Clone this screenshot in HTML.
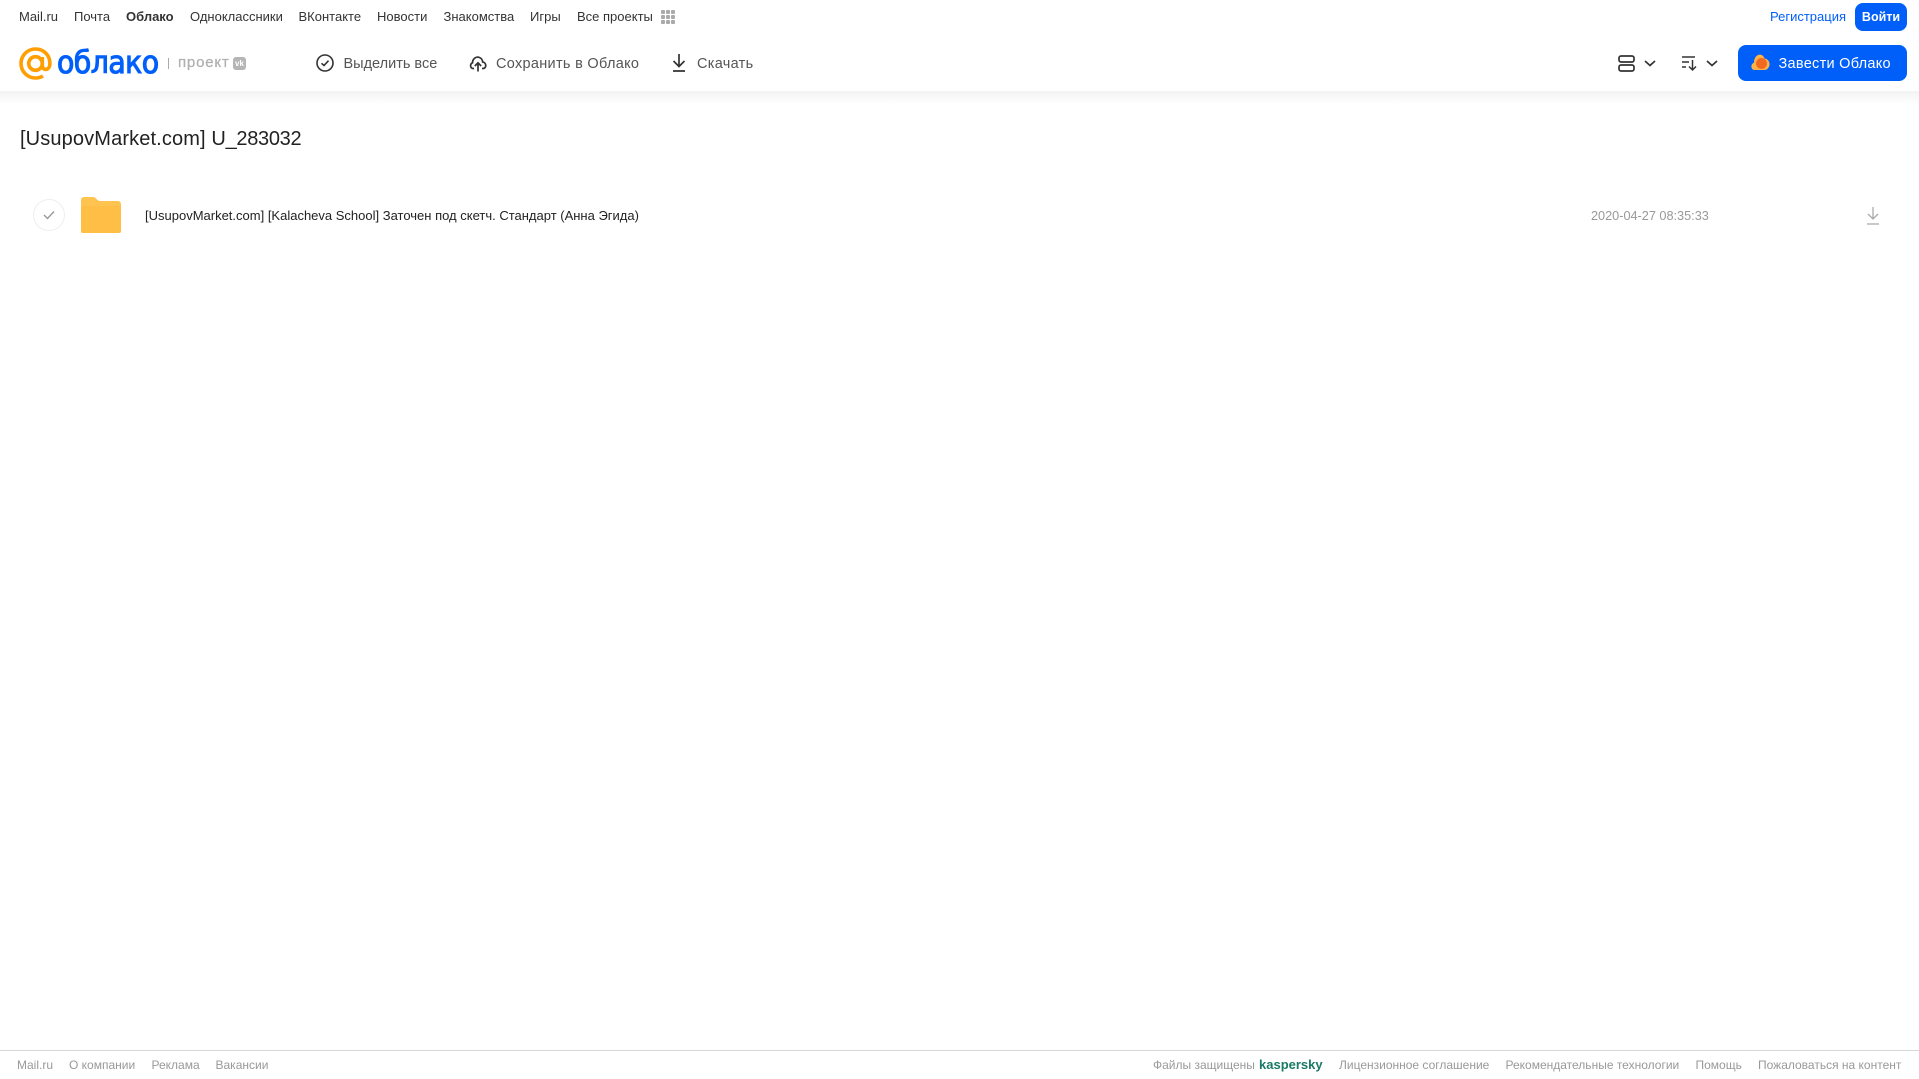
<!DOCTYPE html>
<html lang="ru"><head><meta charset="utf-8"><title>Облако</title>
<style>
html,body{margin:0;padding:0;background:#fff;width:1919px;height:1079px;overflow:hidden;font-family:"Liberation Sans",Arial,sans-serif}
.t{position:absolute;white-space:nowrap;line-height:20px}
.n{top:7px;font-size:13px;color:#333}
.a{top:54px;font-size:14.5px;color:#555;letter-spacing:.3px}
.f{top:1055px;font-size:12px;color:#999}
svg{position:absolute;overflow:visible}
</style></head><body>
<div style="position:absolute;left:0;top:91px;width:1919px;height:14px;background:linear-gradient(#f3f3f3,#fff)"></div>
<span class="t n" style="left:19px">Mail.ru</span>
<span class="t n" style="left:74px">Почта</span>
<span class="t n" style="left:126px;font-weight:bold">Облако</span>
<span class="t n" style="left:190px">Одноклассники</span>
<span class="t n" style="left:298.5px">ВКонтакте</span>
<span class="t n" style="left:377px">Новости</span>
<span class="t n" style="left:443.5px">Знакомства</span>
<span class="t n" style="left:530px">Игры</span>
<span class="t n" style="left:577px">Все проекты</span>
<svg style="left:661px;top:10px" width="14" height="14" fill="#aaa"><rect width="4" height="4" rx="1"/><rect x="5" width="4" height="4" rx="1"/><rect x="10" width="4" height="4" rx="1"/><rect y="5" width="4" height="4" rx="1"/><rect x="5" y="5" width="4" height="4" rx="1"/><rect x="10" y="5" width="4" height="4" rx="1"/><rect y="10" width="4" height="4" rx="1"/><rect x="5" y="10" width="4" height="4" rx="1"/><rect x="10" y="10" width="4" height="4" rx="1"/></svg>
<span class="t n" style="left:1770px;color:#005ff9">Регистрация</span>
<div class="t" style="left:1855px;top:3px;width:52px;height:28px;line-height:28px;background:#005ff9;border-radius:8px;color:#fff;font-size:12.5px;font-weight:bold;text-align:center">Войти</div>
<svg style="left:19px;top:47px" width="33" height="33" viewBox="0 0 33 33" fill="none" stroke="#ff9e00" stroke-width="3.6"><circle cx="16.5" cy="16.5" r="6.8"/><path d="M23.3 10v8.5c0 5.5 7.5 5.5 7.6-2C31 8 24.500 2 16.500 2 8.500 2 2 8.500 2 16.500S8.500 31 16.500 31c3 0 5.500-.8 7.500-2"/></svg>
<span class="t" style="left:57px;top:46px;font:normal 31px/34px 'DejaVu Sans',sans-serif;color:#005ff9;-webkit-text-stroke:1.1px #005ff9;letter-spacing:-.6px;transform-origin:0 0;transform:scaleX(.915)">облако</span>
<div style="position:absolute;left:168px;top:58px;width:1px;height:11px;background:#aaa"></div>
<span class="t" style="left:178px;top:53px;font-size:15px;color:#b0b0b0;letter-spacing:.8px;-webkit-text-stroke:.25px #b0b0b0">проект</span>
<div style="position:absolute;left:233px;top:57px;width:13px;height:13px;background:#b5b5b5;border-radius:3px;color:#fff;font:bold 8px/13px 'Liberation Sans',sans-serif;text-align:center">vk</div>
<svg style="left:316px;top:54px" width="18" height="18" fill="none" stroke="#333" stroke-width="1.6"><circle cx="9" cy="9" r="8"/><path d="M5.500 9.300 8 11.500l4.500-4.800"/></svg>
<span class="t a" style="left:343.5px;letter-spacing:0">Выделить все</span>
<svg style="left:469px;top:54px" width="18" height="18" fill="none" stroke="#333" stroke-width="1.7"><path d="M5 14.500H4C1 14.500.8 9.700 3.500 8.800 3.500 5 7 2 10.500 3.500c2 .8 3 2.500 3.200 4.500 4 .5 4 6.500.3 6.500h-1"/><path d="M9 17.500V9M5.800 12 9 8.800l3.200 3.200"/></svg>
<span class="t a" style="left:496px">Сохранить в Облако</span>
<svg style="left:672px;top:54px" width="14" height="18" fill="none" stroke="#333" stroke-width="1.700"><path d="M7 0v12M1.500 7 7 12.500 12.500 7M1 17h12"/></svg>
<span class="t a" style="left:697px">Скачать</span>
<svg style="left:1618px;top:55px" width="17" height="17" fill="none" stroke="#333" stroke-width="1.700"><rect x="1" y="1" width="15" height="6" rx="2"/><rect x="1" y="10" width="15" height="6" rx="2"/></svg>
<svg style="left:1644px;top:60px" width="12" height="7" fill="none" stroke="#333" stroke-width="1.700"><path d="M1 1l5 4.500L11 1"/></svg>
<svg style="left:1681px;top:55px" width="17" height="16" fill="none" stroke="#333" stroke-width="1.500"><path d="M1 2h13M1 7h7M1 12h4M11.500 5v10M8 11.500l3.500 3.500 3.500-3.500"/></svg>
<svg style="left:1706px;top:60px" width="12" height="7" fill="none" stroke="#333" stroke-width="1.700"><path d="M1 1l5 4.500L11 1"/></svg>
<div style="position:absolute;left:1738px;top:45px;width:169px;height:36px;background:#005ff9;border-radius:8px"></div>
<svg style="left:1751px;top:54px" width="19" height="17"><path d="M4 16C1 16 0 13.500.5 11.500 1 9.500 2.500 9 3 8.500 3 3 7-.5 10.500 1c1.500.5 2.500 2 3 3.500C17 5 19 8 18.500 11c-.5 3-2.500 5-5.500 5z" fill="#ffb347"/><circle cx="10.500" cy="9.500" r="5.500" fill="#f26a21"/></svg>
<span class="t" style="left:1778.5px;top:54px;font-size:14.500px;color:#fff;letter-spacing:.28px">Завести Облако</span>
<span class="t" style="left:20px;top:127px;font-size:20px;line-height:24px;color:#222"><span style="letter-spacing:.13px">[UsupovMarket.com] </span><span style="letter-spacing:-.3px">U_283032</span></span>
<div style="position:absolute;left:33px;top:199px;width:30px;height:30px;border:1px solid #eee;border-radius:50%"></div>
<svg style="left:43px;top:210px" width="12" height="10" fill="none" stroke="#999" stroke-width="1.400"><path d="M1 5l3.500 3.500L11 1.500"/></svg>
<svg style="left:81px;top:197px" width="40" height="36"><path d="M0 3a3 3 0 0 1 3-3h9c3 0 4 4 7 4h18a3 3 0 0 1 3 3v26a3 3 0 0 1-3 3H3a3 3 0 0 1-3-3z" fill="#ffc44f"/><rect y="9" width="40" height="27" rx="2" fill="#ffbe45"/></svg>
<span class="t" style="left:145px;top:206px;font-size:13px;color:#222">[UsupovMarket.com] [Kalacheva School] Заточен под скетч. Стандарт (Анна Эгида)</span>
<span class="t" style="left:1591px;top:206px;font-size:12.7px;color:#999">2020-04-27 08:35:33</span>
<svg style="left:1866px;top:207px" width="14" height="18" fill="none" stroke="#aaa" stroke-width="1.300"><path d="M7 0v12M2 7l5 5 5-5M1 17h12"/></svg>
<div style="position:absolute;left:0;top:1050px;width:1919px;height:1px;background:#d8d8d8"></div>
<span class="t f" style="left:17px">Mail.ru</span>
<span class="t f" style="left:69px">О компании</span>
<span class="t f" style="left:151.5px">Реклама</span>
<span class="t f" style="left:215.500px">Вакансии</span>
<span class="t f" style="left:1153px">Файлы защищены</span>
<span class="t f" style="left:1259px;font-size:13px;font-weight:bold;color:#1a7a66">kaspersky</span>
<span class="t f" style="left:1339px">Лицензионное соглашение</span>
<span class="t f" style="left:1505.5px">Рекомендательные технологии</span>
<span class="t f" style="left:1695.5px">Помощь</span>
<span class="t f" style="left:1758px">Пожаловаться на контент</span>
</body></html>
